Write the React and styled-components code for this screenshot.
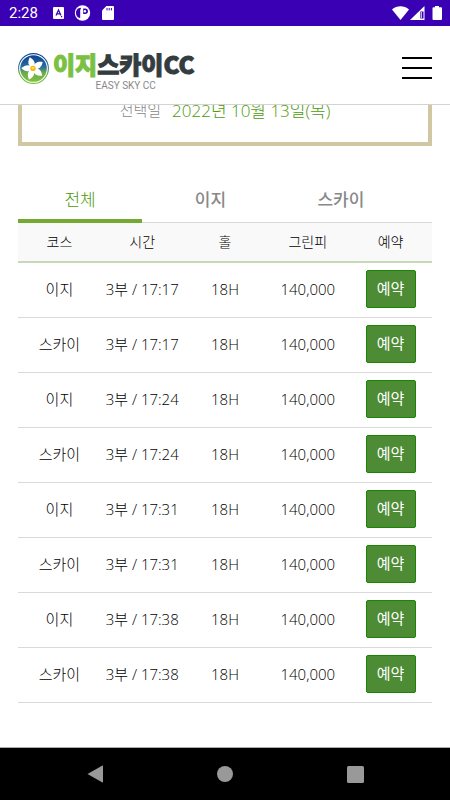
import React, { useState } from 'react';
import styled, { createGlobalStyle } from 'styled-components';

const GlobalStyle = createGlobalStyle`
  * {
    box-sizing: border-box;
  }

  body {
    margin: 0;
    background: #fff;
    color: #000;
    font-family: 'Open Sans', 'Noto Sans CJK KR', sans-serif;
    font-weight: 300;
  }

  button {
    padding: 0;
    border: 0;
    background: none;
    font-family: inherit;
    cursor: pointer;
  }
`;

const Page = styled.div`
  display: flex;
  flex-direction: column;
  min-height: 100vh;
`;

// Status bar
const StatusBar = styled.div`
  position: relative;
  z-index: 1;
  display: flex;
  align-items: center;
  justify-content: space-between;
  height: 26px;
  padding: 0 8px 0 9px;
  background: #3a00b3;
  color: #fff;
  font-family: Roboto, sans-serif;
  font-size: 15px;
  font-weight: 400;
`;

const StatusGroup = styled.div`
  display: flex;
  align-items: center;
  gap: ${props => props.$gap}px;
`;

const Clock = styled.span`
  margin-right: 7px;
`;

// Site header
const Header = styled.header`
  position: relative;
  z-index: 1;
  display: flex;
  align-items: center;
  justify-content: space-between;
  height: 79px;
  padding: 6px 18px 0;
  border-bottom: 1px solid #d3d3d3;
  background: #fff;
`;

const Logo = styled.a`
  display: flex;
  align-items: center;
  gap: 4px;
  color: #333c3f;
  text-decoration: none;
`;

const LogoText = styled.span`
  display: flex;
  flex-direction: column;
  align-items: center;
  gap: 2px;
  padding-top: 4px;
`;

const LogoName = styled.span`
  font-family: 'Noto Sans CJK KR', sans-serif;
  font-size: 24px;
  font-weight: 900;
  line-height: 30px;
  -webkit-text-stroke-width: 1px;

  em {
    color: #7ac143;
    font-style: normal;
  }
`;

const LogoSub = styled.span`
  padding-left: 4px;
  color: #888;
  font-family: Roboto, sans-serif;
  font-size: 10px;
  font-weight: 400;
  line-height: 10px;
`;

const MenuButton = styled.button`
  display: flex;
  flex-direction: column;
  gap: 8px;
  width: 30px;

  span {
    width: 100%;
    height: 2px;
    background: #000;
  }
`;

// Reservation list
const Main = styled.main`
  flex: 1;
  padding: 0 18px 44px;
`;

// The box is scrolled partly under the header
const DateBox = styled.section`
  display: flex;
  align-items: center;
  justify-content: center;
  gap: 11px;
  height: 74px;
  margin-top: -33px;
  border: 4px solid #d1c7a3;
  color: #888;
  font-size: 15px;

  strong {
    color: #4c9a0a;
    font-size: 17px;
    font-weight: 300;
  }
`;

const Tabs = styled.div`
  display: grid;
  grid-template-columns: 30% 33% 30%;
  margin-top: 32px;
  border-bottom: 1px solid #d9d9d9;
`;

const Tab = styled.button`
  height: 45px;
  margin-bottom: -1px;
  border-bottom: 4px solid ${props => (props.$active ? '#74a933' : 'transparent')};
  color: ${props => (props.$active ? '#4c9a0a' : '#888')};
  font-size: 17px;
  font-weight: ${props => (props.$active ? 300 : 500)};
`;

const Table = styled.table`
  width: 100%;
  border-collapse: separate;
  border-spacing: 0;
  table-layout: fixed;
  text-align: center;
`;

const HeadCell = styled.th`
  height: 40px;
  padding: 0 0 2px;
  border-bottom: 2px solid #c8d9b8;
  background: #f9f9f9;
  font-size: 14px;
  font-weight: 300;
`;

const Cell = styled.td`
  height: 55px;
  padding: 0 0 3px;
  border-bottom: 1px solid #d9d9d9;
  font-size: 15px;
  white-space: nowrap;
`;

const BookButton = styled.button`
  display: block;
  width: 50px;
  height: 38px;
  margin: 0 auto;
  padding-bottom: 2px;
  border: 1px solid #198500;
  border-radius: 2px;
  background: #4d8b35;
  color: #fff;
  font-size: 15px;
  font-weight: 400;
`;

// Android navigation
const NavBar = styled.nav`
  display: flex;
  align-items: center;
  justify-content: space-around;
  height: 53px;
  padding: 0 30px;
  border-top: 1px solid #aaa;
  background: #000;
`;

const NavButton = styled.button`
  display: flex;
  justify-content: center;
  width: 48px;
`;

const COLUMNS = ['코스', '시간', '홀', '그린피', '예약'];

const TIMES = ['17:17', '17:24', '17:31', '17:38'];

const TEE_TIMES = TIMES.flatMap(time =>
  ['이지', '스카이'].map(course => ({ course, time, holes: '18H', fee: '140,000' }))
);

const LogoMark = () => (
  <svg width="31" height="31" viewBox="0 0 31 31" aria-hidden="true">
    <defs>
      <linearGradient id="mark" x1="0" y1="0" x2="0" y2="1">
        <stop offset="0" stopColor="#0b4292" />
        <stop offset="0.45" stopColor="#2b6da0" />
        <stop offset="0.65" stopColor="#68ab4c" />
        <stop offset="1" stopColor="#80c241" />
      </linearGradient>
    </defs>
    <circle cx="15.5" cy="15.5" r="14.9" fill="#fff" stroke="url(#mark)" strokeWidth="1.1" />
    <circle cx="15.5" cy="15.5" r="13.3" fill="url(#mark)" />
    <g fill="#fff" transform="rotate(-14 15 15.5)">
      {[0, 72, 144, 216, 288].map(angle => (
        <path
          key={angle}
          d="M15 15.5C11 12 10.6 8.3 14.6 3.8C19 8.3 19 12 15 15.5Z"
          transform={`rotate(${angle} 15 15.5)`}
        />
      ))}
    </g>
    <circle cx="15" cy="15.4" r="2.7" fill="#f9b916" />
    <circle cx="15" cy="15" r="1.1" fill="#ffe36a" />
  </svg>
);

export default function App() {
  const [tab, setTab] = useState('전체');
  const rows = TEE_TIMES.filter(row => tab === '전체' || row.course === tab);

  return (
    <Page>
      <GlobalStyle />

      <StatusBar>
        <StatusGroup $gap={8}>
          <Clock>2:28</Clock>
          <svg width="11" height="12" viewBox="0 0 11 12">
            <rect width="11" height="12" rx="1" fill="#fff" />
            <path d="M3 8.5L5.5 3L8 8.5M3.8 6.8H7.2M8 9.7h1.2" fill="none" stroke="#3a00b3" strokeWidth="1.2" />
          </svg>
          <svg width="22" height="16" viewBox="0 0 22 16">
            <circle cx="10.5" cy="8" r="7.7" fill="#fff" />
            <path d="M9.200 2.800C5.200 3 4 5.600 4 8S5.200 12.700 8.200 13V5Z" fill="#3a00b3" />
            <path d="M10.400 5V13.500" stroke="#fff" strokeWidth="2.600" />
            <path d="M11.200 3.500H13.200A2.600 2.600 0 0 1 13.200 8.900H11.200Z" fill="#3a00b3" />
            <circle cx="12.900" cy="6.200" r="1.200" fill="#fff" />
          </svg>
          <svg width="12" height="14" viewBox="0 0 12 14">
            <path d="M4.4 0H11a1 1 0 0 1 1 1V13a1 1 0 0 1-1 1H1a1 1 0 0 1-1-1V4.4Z" fill="#fff" />
            <path d="M5 2v2.4M7.2 2v2.4M9.4 2v2.4" stroke="#3a00b3" strokeWidth="1" />
          </svg>
        </StatusGroup>
        <StatusGroup $gap={1}>
          <svg width="17" height="14" viewBox="0 0 17 14">
            <path d="M0 3.4C5 -0.9 12 -0.9 17 3.4L8.5 14Z" fill="#fff" />
          </svg>
          <svg width="15" height="14" viewBox="0 0 15 14">
            <path d="M0 14L14.5 0V14Z" fill="#fff" />
            <path d="M10.3 5.5H13.5V12.5H10.3Z" fill="#3a00b3" />
            <path d="M11.4 6V12" stroke="#fff" strokeWidth="0.8" />
          </svg>
          <svg width="16" height="14" viewBox="0 0 16 14">
            <path d="M9 0h4v1.300H15a1 1 0 0 1 1 1V13a1 1 0 0 1-1 1H7.500a1 1 0 0 1-1-1V2.300a1 1 0 0 1 1-1H9Z" fill="#fff" />
          </svg>
        </StatusGroup>
      </StatusBar>

      <Header>
        <Logo href="#" aria-label="이지스카이CC">
          <LogoMark />
          <LogoText>
            <LogoName>
              <em>이지</em>스카이CC
            </LogoName>
            <LogoSub>EASY SKY CC</LogoSub>
          </LogoText>
        </Logo>
        <MenuButton type="button" aria-label="메뉴">
          <span />
          <span />
          <span />
        </MenuButton>
      </Header>

      <Main>
        <DateBox>
          선택일 <strong>2022년 10월 13일(목)</strong>
        </DateBox>

        <Tabs role="tablist">
          {['전체', '이지', '스카이'].map(name => (
            <Tab
              key={name}
              type="button"
              role="tab"
              aria-selected={tab === name}
              $active={tab === name}
              onClick={() => setTab(name)}
            >
              {name}
            </Tab>
          ))}
        </Tabs>

        <Table>
          <thead>
            <tr>
              {COLUMNS.map(column => (
                <HeadCell key={column} scope="col">{column}</HeadCell>
              ))}
            </tr>
          </thead>
          <tbody>
            {rows.map(row => (
              <tr key={row.course + row.time}>
                <Cell>{row.course}</Cell>
                <Cell>3부 / {row.time}</Cell>
                <Cell>{row.holes}</Cell>
                <Cell>{row.fee}</Cell>
                <Cell>
                  <BookButton type="button">예약</BookButton>
                </Cell>
              </tr>
            ))}
          </tbody>
        </Table>
      </Main>

      <NavBar>
        <NavButton type="button" aria-label="뒤로">
          <svg width="16" height="18" viewBox="0 0 16 18">
            <path d="M0.500 9L15 0.700Q16 0.300 16 1.200V16.800Q16 17.700 15 17.300Z" fill="#999" />
          </svg>
        </NavButton>
        <NavButton type="button" aria-label="홈">
          <svg width="16" height="16" viewBox="0 0 16 16">
            <circle cx="8" cy="8" r="8" fill="#999" />
          </svg>
        </NavButton>
        <NavButton type="button" aria-label="최근 앱">
          <svg width="17" height="17" viewBox="0 0 17 17">
            <rect width="17" height="17" rx="1.500" fill="#999" />
          </svg>
        </NavButton>
      </NavBar>
    </Page>
  );
}
